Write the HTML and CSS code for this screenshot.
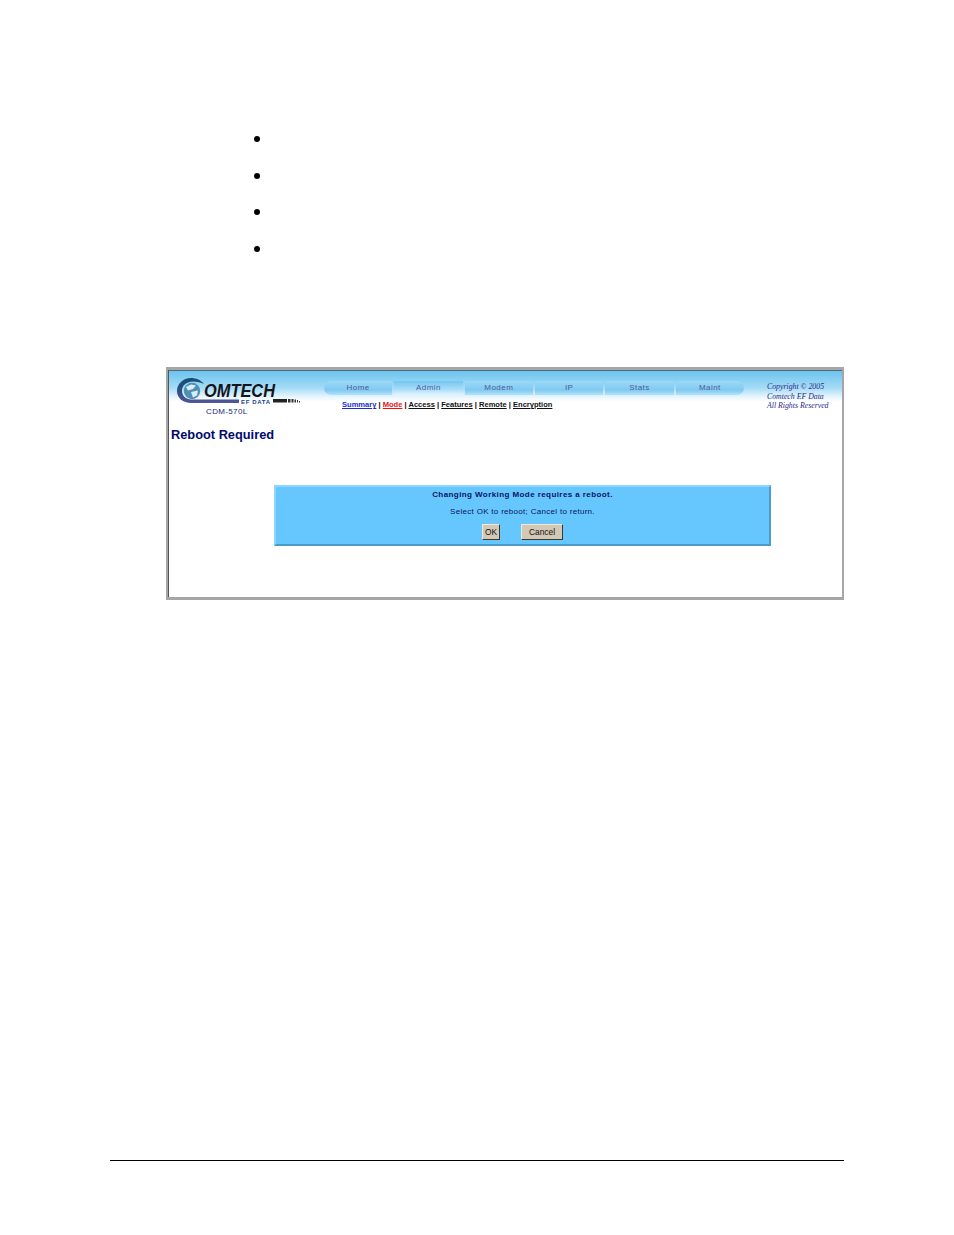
FILE: index.html
```html
<!DOCTYPE html>
<html lang="en">
<head>
<meta charset="utf-8">
<title>Reboot Required</title>
<link rel="stylesheet" href="styles.css">
</head>
<body>
<div class="page">
  <ul class="bullets">
    <li></li>
    <li></li>
    <li></li>
    <li></li>
  </ul>
  <section class="shot">
    <header class="banner">
      <div class="brand">
        <svg class="logo" width="124" height="26" viewBox="0 0 124 26">
          <defs>
            <linearGradient id="ring" x1="0" y1="0" x2="0" y2="1">
              <stop offset="0" stop-color="#14506e"/>
              <stop offset=".5" stop-color="#2c4f84"/>
              <stop offset="1" stop-color="#54549a"/>
            </linearGradient>
          </defs>
          <path d="M27 6 C24 2 19 0 14 0 C6 0 0 6 0 13 C0 20 6 25 14 25 L62 25 L62 21.500 L17 21.500 C10 22 5 18.500 5 13 C5 7 10 3.500 16 3.500 C20 3.500 24 4.500 27 6 Z" fill="url(#ring)"/>
          <circle cx="15" cy="13" r="8.200" fill="#4f8fb4"/>
          <path d="M9 9 L14 6.500 L19 7.500 L16 11 L11 12.500 Z M14 14 L21 12.500 L20 17.500 L16 19.500 Z" fill="#dcecf4"/>
          <text class="logo-name" x="27" y="18.500" textLength="71" lengthAdjust="spacingAndGlyphs">OMTECH</text>
          <text class="logo-sub" x="64" y="25.500" textLength="29" lengthAdjust="spacing">EF DATA</text>
          <rect x="96" y="21" width="14" height="3.500" fill="#222"/>
          <path d="M111 21h2.500v3.500h-2.500z M114.500 21h2v3.500h-2z M117.500 21.500h1.500v3h-1.500z M120 22h1v2.500h-1z M122 23h1v1.500h-1z" fill="#333"/>
        </svg>
        <div class="model">CDM-570L</div>
      </div>
      <div class="navcol">
        <nav class="tabs">
          <a class="tab first">Home</a>
          <a class="tab active">Admin</a>
          <a class="tab">Modem</a>
          <a class="tab">IP</a>
          <a class="tab">Stats</a>
          <a class="tab last">Maint</a>
        </nav>
        <div class="subnav">
          <a class="link blue">Summary</a> | <a class="link red">Mode</a> | <a class="link">Access</a> | <a class="link">Features</a> | <a class="link">Remote</a> | <a class="link">Encryption</a>
        </div>
      </div>
      <div class="copy">Copyright © 2005<br>Comtech EF Data<br>All Rights Reserved</div>
    </header>
    <h1 class="title">Reboot Required</h1>
    <div class="dialog">
      <p class="msg">Changing Working Mode requires a reboot.</p>
      <p class="hint">Select OK to reboot; Cancel to return.</p>
      <div class="actions">
        <button class="btn">OK</button>
        <button class="btn">Cancel</button>
      </div>
    </div>
  </section>
  <div class="rule"></div>
</div>
</body>
</html>
```
FILE: styles.css
```css
html, body { margin: 0; padding: 0; background: #fff; }
.page { width: 954px; height: 1235px; box-sizing: border-box; padding-top: 136px; font-family: "Liberation Sans", Arial, sans-serif; display: flex; flex-direction: column; }
.bullets { list-style: none; margin: 0 0 0 254px; padding: 0; display: flex; flex-direction: column; gap: 30.7px; }
.bullets li { width: 6px; height: 6px; background: #000; border-radius: 50%; }
.shot { margin: 115px 0 0 166px; width: 678px; height: 233px; box-sizing: border-box; border: solid #a6a6a6; border-width: 3px 2px 3px 2px; padding-left: 1px; box-shadow: inset 1px 0 0 #555; background: #fff; }
.banner { height: 43px; display: flex; border-top: 1px solid #4e6e80; background: linear-gradient(#6cc3ef 0, #a5dcf7 17px, #e8f6fd 26px, #fff 31px); }
.brand { width: 155px; flex: none; padding: 7px 0 0 8px; box-sizing: border-box; }
.logo { display: block; }
.logo-name { font: italic bold 19px "Liberation Sans", sans-serif; fill: #14141c; }
.logo-sub { font: bold 6px "Liberation Sans", sans-serif; fill: #24408c; }
.model { margin: 3px 0 0 29px; font-size: 8px; line-height: 9px; letter-spacing: .35px; color: #1a2a80; }
.navcol { width: 420px; flex: none; }
.tabs { margin-top: 10px; height: 14px; display: flex; gap: 2px; }
.tab { flex: 1; font-size: 8px; line-height: 13px; letter-spacing: .45px; text-align: center; color: #4d5c96; background: linear-gradient(#9ed8f7, #7fcaf2 65%, #b4e2f9); }
.tab.first { border-radius: 7px 0 0 7px; }
.tab.last { border-radius: 0 7px 7px 0; }
.tab.active { background: linear-gradient(#74c6f0, #a9ddf8 60%, #e4f5fd); }
.subnav { margin: 5px 0 0 18px; font-size: 7.55px; line-height: 10px; font-weight: bold; color: #000; white-space: nowrap; }
.link { text-decoration: underline; color: #111; }
.link.blue { color: #1a2fd0; }
.link.red { color: #f01010; }
.copy { margin: 11px 0 0 23px; font: italic 7.8px/9.6px "Liberation Serif", serif; color: #2a2a8a; white-space: nowrap; }
.title { margin: 14px 0 0 2px; font-size: 12.8px; line-height: 14px; font-weight: bold; color: #000a6e; }
.dialog { margin: 43px 0 0 105px; width: 497px; height: 61px; box-sizing: border-box; background: #66c7ff; border: 2px solid; border-color: #8cd6ff #4b9cc8 #4b9cc8 #8cd6ff; text-align: center; color: #0a1560; font-size: 8px; }
.msg { margin: 2px 0 0; font-weight: bold; line-height: 11px; letter-spacing: .42px; }
.hint { margin: 6px 0 0; line-height: 11px; letter-spacing: .3px; }
.actions { margin-top: 7px; display: flex; justify-content: center; gap: 21px; }
.btn { margin: 0; padding: 0; height: 16px; font: 8.4px "Liberation Sans", sans-serif; color: #111; background: #d4c8b4; border: 1px solid; border-color: #efe8dc #3a3a30 #3a3a30 #efe8dc; width: 18px; }
.btn + .btn { width: 42px; }
.rule { margin: 560px 0 0 110px; width: 734px; height: 1px; background: #000; }
```
